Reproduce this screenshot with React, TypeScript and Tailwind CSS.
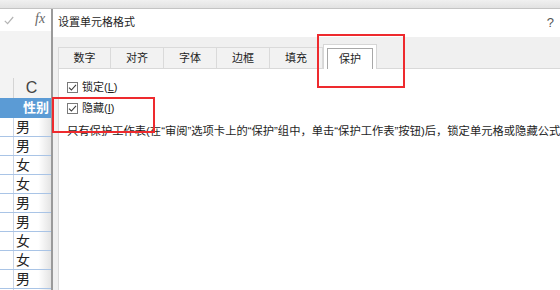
const cjk = "font-['Liberation_Sans','Noto_Sans_CJK_SC',sans-serif]";

const rows = ['男', '男', '女', '女', '男', '男', '女', '女', '男', ''];
const tabs = ['数字', '对齐', '字体', '边框', '填充'];

function Check() {
  return (
    <span className="w-[11px] h-[11px] border border-[#7a7a7a] bg-white flex items-center justify-center shrink-0">
      <svg width="9" height="9" viewBox="0 0 9 9" fill="none">
        <path d="M1 4.6L3.4 7L8 1.8" stroke="#3c3c3c" strokeWidth="1.1" />
      </svg>
    </span>
  );
}

function Sheet() {
  return (
    <div className="w-[51px] flex flex-col shrink-0 overflow-hidden">
      {/* formula bar */}
      <div className="h-[22px] shrink-0 bg-white flex items-center">
        <svg width="10" height="9" viewBox="0 0 10 9" fill="none" className="ml-[4px]">
          <path d="M0.8 4.8L3.6 7.6L9.2 1" stroke="#b4b4b4" strokeWidth="1.2" />
        </svg>
        <span className="ml-[21px] mb-[2px] text-[14px] italic text-[#666] font-['Liberation_Serif',serif] leading-none">
          fx
        </span>
      </div>
      <div className="h-[47px] shrink-0 bg-[#f3f3f3]" />
      {/* column header */}
      <div className="h-[20px] shrink-0 bg-[#f3f3f3] flex">
        <div className="w-[14px] border-r border-[#d4d4d4]" />
        <div className="flex-1 flex items-center justify-center text-[16px] text-[#444] font-['Liberation_Sans',sans-serif] pr-[2px]">
          C
        </div>
      </div>
      <div className={`h-[20px] shrink-0 bg-[#5b9bd5] flex items-center justify-end pr-[2px] text-[13px] font-bold text-white ${cjk}`}>
        性别
      </div>
      {rows.map((r, i) => (
        <div key={i} className="h-[19px] shrink-0 flex border-b border-[#a9c4e6] bg-gradient-to-r from-white from-[75%] to-[#e4e4e4]">
          <div className="w-[14px] border-r border-[#cbd6e6]" />
          <div className={`flex-1 pl-[2px] text-[14px] leading-[18px] text-[#222] ${cjk}`}>{r}</div>
        </div>
      ))}
    </div>
  );
}

function Dialog() {
  return (
    <div className={`flex-1 min-w-0 flex flex-col border-l-2 border-[#9a9a9a] ${cjk} text-[#1e1e1e]`}>
      <div className="h-[28px] shrink-0 bg-white flex items-center justify-between pl-[5px] pr-[6px]">
        <span className="text-[11px] mb-[2px]">设置单元格格式</span>
        <span className="text-[13px] text-[#555] font-['Liberation_Sans',sans-serif]">?</span>
      </div>
      <div className="flex-1 bg-[#f0f0f0] pl-[5px] flex flex-col">
        <div className="h-[31px] flex items-end shrink-0">
          {tabs.map((t) => (
            <div
              key={t}
              className="w-[53px] h-[21px] border-t border-r border-[#dadada] bg-[#f2f2f2] flex items-center justify-center text-[11px] first:border-l"
            >
              {t}
            </div>
          ))}
          <div className="w-[54px] h-[25px] -mb-px relative z-10 bg-white border border-b-0 border-[#d6d6d6] pl-[3px] pt-[3px] pr-[3px]">
            <div className="h-full border border-b-0 border-[#a8a8a8] flex items-center justify-center text-[11px]">
              保护
            </div>
          </div>
        </div>
        <div className="flex-1 min-w-0 overflow-hidden bg-white border-l border-t border-[#d9d9d9] pl-[8px] pt-[13px] flex flex-col">
          <label className="flex items-center gap-[4px] h-[11px] text-[11px]">
            <Check />
            <span>
              锁定(<span className="underline">L</span>)
            </span>
          </label>
          <label className="flex items-center gap-[4px] h-[11px] mt-[10px] text-[11px]">
            <Check />
            <span>
              隐藏(<span className="underline">I</span>)
            </span>
          </label>
          <p className="mt-[10px] text-[11.3px] leading-[14px] whitespace-nowrap">
            只有保护工作表(在“审阅”选项卡上的“保护”组中，单击“保护工作表”按钮)后，锁定单元格或隐藏公式才有效。
          </p>
        </div>
      </div>
    </div>
  );
}

export default function App() {
  return (
    <div className="w-[560px] h-[290px] relative overflow-hidden bg-white flex flex-col">
      <div className="h-[9px] shrink-0 bg-gradient-to-b from-[#f0f0f0] to-[#e2e2e2] border-b border-[#c4c4c4]" />
      <div className="flex flex-1 min-h-0">
        <Sheet />
        <Dialog />
      </div>
      {/* annotation boxes */}
      <div className="absolute left-[317px] top-[34px] w-[88px] h-[54px] border-2 border-[#ee2a2e]" />
      <div className="absolute left-[52px] top-[97px] w-[103px] h-[36px] border-2 border-[#ee2a2e]" />
    </div>
  );
}
